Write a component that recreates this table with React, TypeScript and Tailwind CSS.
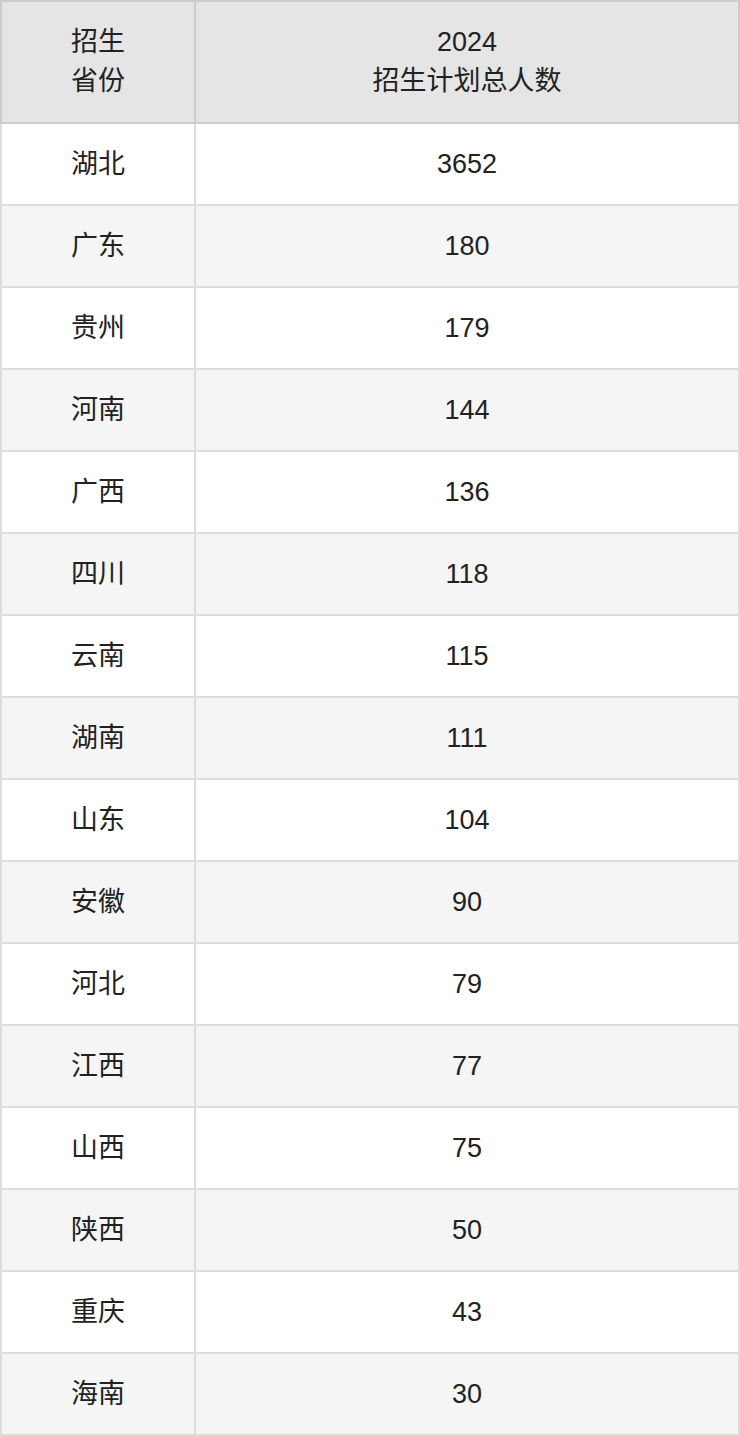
import React from "react";

const rows: [string, string][] = [
  ["湖北", "3652"],
  ["广东", "180"],
  ["贵州", "179"],
  ["河南", "144"],
  ["广西", "136"],
  ["四川", "118"],
  ["云南", "115"],
  ["湖南", "111"],
  ["山东", "104"],
  ["安徽", "90"],
  ["河北", "79"],
  ["江西", "77"],
  ["山西", "75"],
  ["陕西", "50"],
  ["重庆", "43"],
  ["海南", "30"],
];

export default function App() {
  return (
    <div
      className="w-[740px] text-[27px] text-[#222]"
      style={{ fontFamily: '"Liberation Sans", "Noto Sans CJK SC", sans-serif' }}
    >
      <div className="flex h-[124px] border-2 border-[#ccc] bg-[#e5e5e5] leading-[39px]">
        <div className="flex w-[192px] items-center justify-center text-center">
          招生
          <br />
          省份
        </div>
        <div className="flex flex-1 items-center justify-center border-l-2 border-[#ccc] text-center">
          2024
          <br />
          招生计划总人数
        </div>
      </div>
      {rows.map(([p, n], i) => (
        <div
          key={p}
          className={`flex h-[82px] border-x-2 border-b-2 border-[#ddd] ${
            i % 2 === 1 ? "bg-[#f5f5f5]" : "bg-white"
          }`}
        >
          <div className="flex w-[192px] items-center justify-center">{p}</div>
          <div className="flex flex-1 items-center justify-center border-l-2 border-[#ddd]">
            {n}
          </div>
        </div>
      ))}
    </div>
  );
}
